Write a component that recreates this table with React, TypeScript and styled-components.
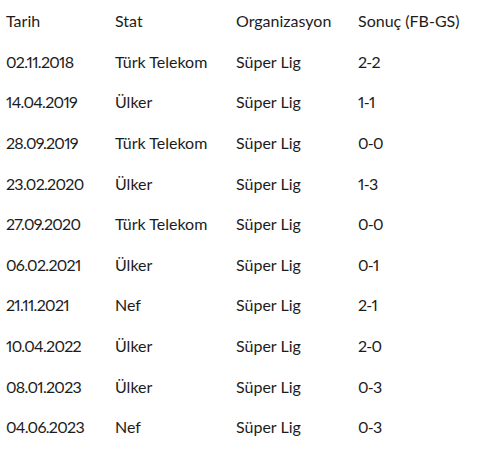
import React from "react";
import styled, { createGlobalStyle } from "styled-components";

const Global = createGlobalStyle`
  html, body {
    margin: 0;
    padding: 0;
    background: #ffffff;
  }
  body {
    font-family: "Lato", "Open Sans", sans-serif;
  }
`;

const Table = styled.div`
  display: grid;
  grid-template-columns: 109px 121px 122px 1fr;
  width: 479px;
  padding: 1px 0 0 6px;
  box-sizing: border-box;
  color: #1c1c1c;
  font-size: 16px;
  font-variant-numeric: proportional-nums;
`;

const Cell = styled.div<{ $num?: boolean }>`
  height: 40.6px;
  display: flex;
  align-items: center;
  white-space: nowrap;
  line-height: 1;
  font-weight: 400;
  letter-spacing: ${(p) => (p.$num ? "-0.7px" : "0")};
`;

type Match = [string, string, string, string];

const rows: Match[] = [
  ["02.11.2018", "Türk Telekom", "Süper Lig", "2-2"],
  ["14.04.2019", "Ülker", "Süper Lig", "1-1"],
  ["28.09.2019", "Türk Telekom", "Süper Lig", "0-0"],
  ["23.02.2020", "Ülker", "Süper Lig", "1-3"],
  ["27.09.2020", "Türk Telekom", "Süper Lig", "0-0"],
  ["06.02.2021", "Ülker", "Süper Lig", "0-1"],
  ["21.11.2021", "Nef", "Süper Lig", "2-1"],
  ["10.04.2022", "Ülker", "Süper Lig", "2-0"],
  ["08.01.2023", "Ülker", "Süper Lig", "0-3"],
  ["04.06.2023", "Nef", "Süper Lig", "0-3"],
];

const head: Match = ["Tarih", "Stat", "Organizasyon", "Sonuç (FB-GS)"];

export default function App() {
  return (
    <>
      <Global />
      <Table>
        {head.map((h) => (
          <Cell key={h}>{h}</Cell>
        ))}
        {rows.map((r) =>
          r.map((c, i) => (
            <Cell key={r[0] + i} $num={i === 0 || i === 3}>
              {c}
            </Cell>
          ))
        )}
      </Table>
    </>
  );
}
